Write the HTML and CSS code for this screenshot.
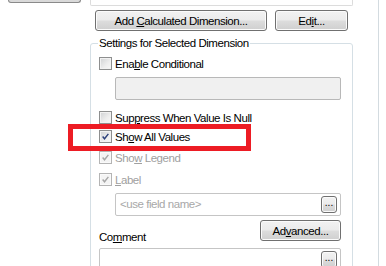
FILE: index.html
```html
<!DOCTYPE html>
<html>
<head>
<meta charset="utf-8">
<link rel="stylesheet" href="styles.css">
</head>
<body>
<div class="screen">
  <div class="leftcol"><div class="stub"></div></div>
  <div class="main">
    <div class="topbox"></div>
    <div class="btnrow">
      <div class="btn btn-calc"><span>Add <u>C</u>alculated Dimension...</span></div>
      <div class="btn btn-edit"><span>Ed<u>i</u>t...</span></div>
    </div>
    <fieldset class="group">
      <legend>Settings for Selected Dimension</legend>
      <div class="cbrow r-enable"><span class="cb"></span><span class="lbl">Ena<u>b</u>le Conditional</span></div>
      <div class="field field-dis f-cond"></div>
      <div class="cbrow r-suppress"><span class="cb"></span><span class="lbl">Sup<u>p</u>ress When Value Is Null</span></div>
      <div class="cbrow r-showall"><span class="cb"><svg viewBox="0 0 11 11" class="chk"><path d="M2 5.5 L4.3 8.3 L9 2.3"/></svg></span><span class="lbl">Sh<u>o</u>w All Values</span></div>
      <div class="cbrow r-legend dis"><span class="cb"><svg viewBox="0 0 11 11" class="chk"><path d="M2 5.5 L4.3 8.3 L9 2.3"/></svg></span><span class="lbl">Sho<u>w</u> Legend</span></div>
      <div class="cbrow r-label dis"><span class="cb"><svg viewBox="0 0 11 11" class="chk"><path d="M2 5.5 L4.3 8.3 L9 2.3"/></svg></span><span class="lbl"><u>L</u>abel</span></div>
      <div class="field f-label"><span class="ph">&lt;use field name&gt;</span><span class="dots">...</span></div>
      <div class="commentrow"><span class="clbl">Co<u>m</u>ment</span><div class="btn btn-adv"><span>Ad<u>v</u>anced...</span></div></div>
      <div class="field f-comment"><span class="ph"></span><span class="dots">...</span></div>
    </fieldset>
  </div>
  <div class="vline"></div>
  <div class="highlight"></div>
</div>
</body>
</html>
```
FILE: styles.css
```css
html, body {
  margin: 0;
  padding: 0;
  background: #ffffff;
}
.screen {
  position: relative;
  width: 386px;
  height: 266px;
  overflow: hidden;
  display: flex;
  align-items: flex-start;
  font-family: "Liberation Sans", Arial, sans-serif;
  font-size: 11.5px;
  letter-spacing: -0.45px;
  color: #000;
}
u { text-decoration: underline; text-underline-offset: 1px; }
.leftcol {
  width: 90px;
  flex: none;
}
.stub {
  margin-left: 8px;
  width: 71px;
  height: 2px;
  border: 1px solid #8a8a8a;
  border-top: none;
  border-radius: 0 0 3px 3px;
  background: #d9d9d9;
}
.main {
  width: 263px;
  flex: none;
  display: flex;
  flex-direction: column;
}
.topbox {
  height: 5px;
  border: 1px solid #dcdcdc;
  border-top: none;
  border-radius: 0 0 2px 2px;
}
.btnrow {
  display: flex;
  gap: 8px;
  margin-top: 4px;
  padding-left: 5px;
}
.btn {
  box-sizing: border-box;
  height: 21px;
  border: 1px solid #707070;
  border-radius: 3px;
  background: linear-gradient(#f2f2f2 0%, #ebebeb 48%, #dddddd 52%, #cfcfcf 100%);
  box-shadow: inset 0 0 0 1px #fbfbfb;
  display: flex;
  align-items: center;
  justify-content: center;
  line-height: 14px;
  white-space: nowrap;
}
.btn-calc { width: 172px; }
.btn-edit { width: 73px; }
.btn-adv { width: 81px; }
.group {
  margin: 5px 0 0 0;
  padding: 0 11px 0 8px;
  border: 1px solid #d5dfe5;
  border-radius: 3px;
  min-width: 0;
  height: 260px;
  display: flex;
  flex-direction: column;
}
.group legend {
  padding: 0 1px;
  margin-left: -1px;
  line-height: 14px;
}
.cbrow {
  display: flex;
  align-items: center;
  height: 13px;
  gap: 3px;
  white-space: nowrap;
}
.lbl { line-height: 14px; }
.cb {
  box-sizing: border-box;
  width: 13px;
  height: 13px;
  flex: none;
  border: 1px solid #8e8f8f;
  background: linear-gradient(135deg, #cfd1d3 0%, #eeeeee 60%, #f8f8f8 100%);
  box-shadow: inset 0 0 0 1px #f2f2f2;
  display: flex;
  align-items: center;
  justify-content: center;
}
.chk { width: 9px; height: 9px; }
.chk path {
  fill: none;
  stroke: #2a3f7a;
  stroke-width: 1.7;
}
.dis { color: #a0a0a0; }
.dis .cb {
  border-color: #b4b4b4;
  background: #f4f4f4;
  box-shadow: inset 0 0 0 1px #fafafa;
}
.dis .chk path { stroke: #a6a6a6; }
.r-enable { margin-top: 7px; }
.field {
  box-sizing: border-box;
  height: 23px;
  border: 1px solid #c5c5c5;
  border-radius: 2px;
  background: #fff;
  display: flex;
  align-items: flex-start;
  justify-content: space-between;
  padding: 2px 3px 0 4px;
}
.field-dis { background: #f0f0f0; border-color: #b8b8b8; }
.f-cond { margin: 7px 0 0 16px; }
.r-suppress { margin-top: 11px; }
.r-showall { margin-top: 6px; }
.r-legend { margin-top: 8px; }
.r-label { margin-top: 9px; }
.f-label { margin: 7px 0 0 16px; }
.ph {
  color: #a8a8a8;
  line-height: 16px;
}
.dots {
  box-sizing: border-box;
  width: 16px;
  height: 17px;
  border: 1px solid #707070;
  border-radius: 3px;
  background: linear-gradient(#f2f2f2 0%, #ebebeb 48%, #dddddd 52%, #cfcfcf 100%);
  box-shadow: inset 0 0 0 1px #fbfbfb;
  font-size: 10px;
  letter-spacing: 0;
  line-height: 12px;
  text-align: center;
  color: #000;
}
.commentrow {
  margin-top: 4px;
  display: flex;
  justify-content: space-between;
  align-items: flex-end;
  height: 21px;
}
.clbl {
  line-height: 14px;
  margin-bottom: -3px;
}
.f-comment {
  margin-top: 7px;
  height: 40px;
}
.vline {
  margin-left: 25px;
  width: 1px;
  height: 266px;
  background: #d3dbe0;
  flex: none;
}
.highlight {
  position: absolute;
  left: 68px;
  top: 124px;
  width: 183px;
  height: 27px;
  box-sizing: border-box;
  border: 5px solid #ed1c24;
}
```
